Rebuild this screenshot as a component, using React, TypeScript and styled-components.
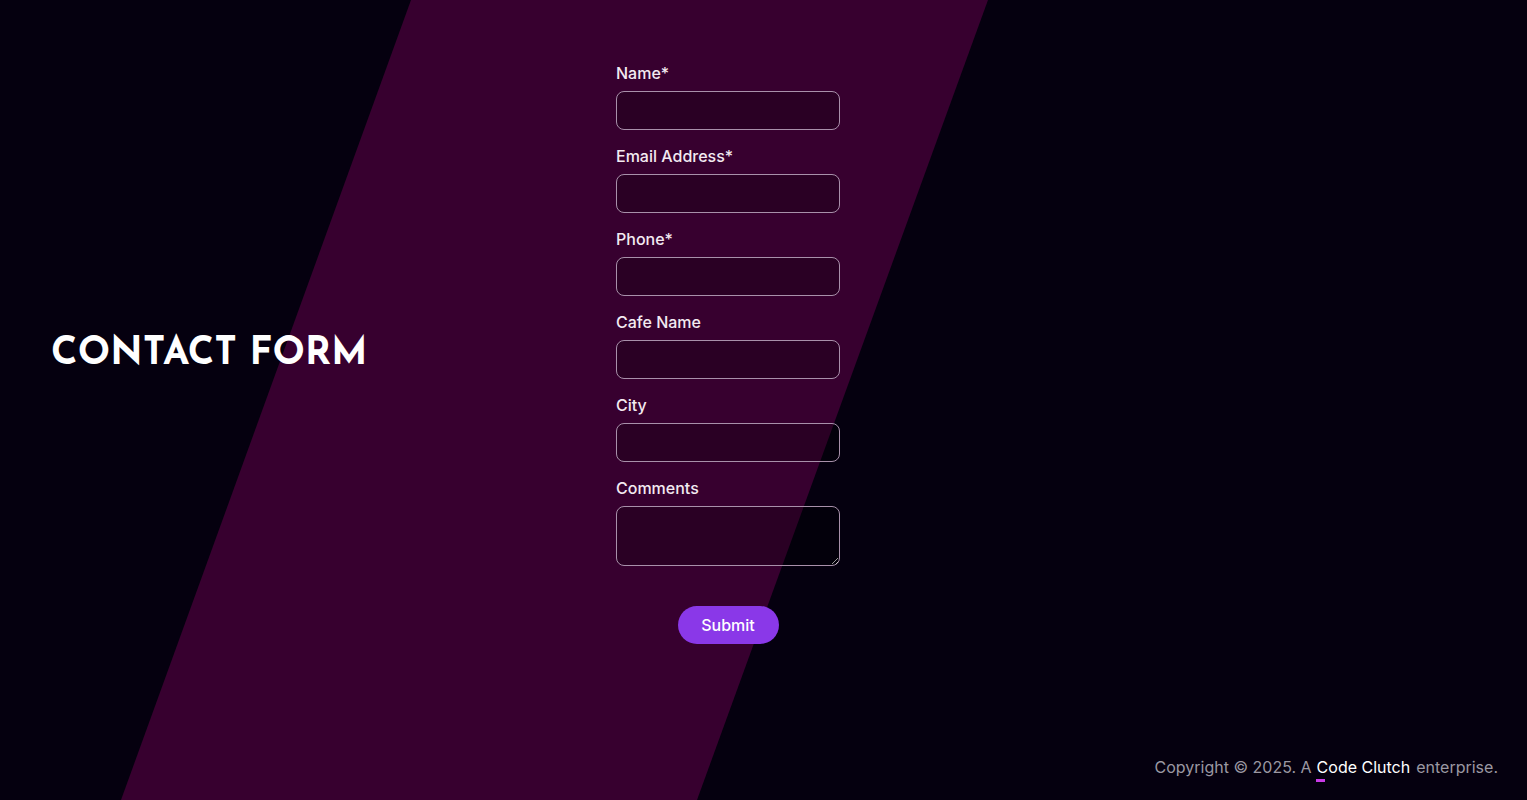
import React from 'react';
import styled, { createGlobalStyle } from 'styled-components';

const GlobalStyle = createGlobalStyle`
  * {
    box-sizing: border-box;
  }

  html,
  body {
    margin: 0;
    padding: 0;
    background: #05000f;
    font-family: Inter, 'Liberation Sans', sans-serif;
  }
`;

const Page = styled.div`
  position: relative;
  display: flex;
  flex-direction: column;
  height: 100vh;
  overflow: hidden;
  background: #05000f;
  color: #fff;

  &::before {
    content: '';
    position: absolute;
    inset: 0;
    background: #37002f;
    clip-path: polygon(411px 0, 988px 0, 697px 800px, 121px 800px);
    z-index: 0;
  }
`;

const Main = styled.main`
  position: relative;
  z-index: 1;
  flex: 1;
  display: grid;
  grid-template-columns: 564px 224px;
  align-items: center;
  align-content: start;
  padding: 63px 0 0 52px;
`;

const Heading = styled.h1`
  margin: 2px 0 0 -1px;
  font-family: 'Josefin Sans', Lato, 'Liberation Sans', sans-serif;
  font-size: 38px;
  font-weight: 700;
  letter-spacing: 0.2px;
  color: #fff;
`;

const Form = styled.form`
  display: flex;
  flex-direction: column;
`;

const Field = styled.div`
  display: flex;
  flex-direction: column;
  margin-bottom: 16px;
`;

const Label = styled.label`
  font-size: 16px;
  font-weight: 450;
  line-height: 20px;
  color: #f3eaf1;
  margin-bottom: 8px;
`;

const Input = styled.input`
  width: 224px;
  height: 39px;
  padding: 0 12px;
  border: 1px solid #a890aa;
  border-radius: 8px;
  background: rgba(0, 0, 0, 0.22);
  color: #fff;
  font: inherit;
  outline: none;
`;

const TextArea = styled.textarea`
  width: 224px;
  height: 60px;
  padding: 8px 12px;
  border: 1px solid #a890aa;
  border-radius: 8px;
  background: rgba(0, 0, 0, 0.22);
  color: #fff;
  font: inherit;
  outline: none;
  resize: vertical;
  display: block;
`;

const SubmitRow = styled.div`
  display: flex;
  justify-content: center;
  margin-top: 24px;
`;

const SubmitButton = styled.button`
  width: 101px;
  height: 38px;
  border: none;
  border-radius: 19px;
  background: #8a38e8;
  color: #fff;
  font-family: Inter, 'Liberation Sans', sans-serif;
  font-size: 16px;
  font-weight: 450;
  cursor: pointer;
`;

const Footer = styled.footer`
  position: relative;
  z-index: 1;
  display: flex;
  justify-content: flex-end;
  padding: 0 29px 23px 0;
  font-size: 16px;
  color: #9b98a2;
`;

const Brand = styled.a`
  position: relative;
  margin: 0 6px 0 5px;
  color: #fff;
  text-decoration: none;

  &::after {
    content: '';
    position: absolute;
    left: -1px;
    bottom: -5px;
    width: 9px;
    height: 3px;
    background: #c93ae6;
  }
`;

const fields = [
  { id: 'name', label: 'Name*', type: 'text' },
  { id: 'email', label: 'Email Address*', type: 'email' },
  { id: 'phone', label: 'Phone*', type: 'tel' },
  { id: 'cafe', label: 'Cafe Name', type: 'text' },
  { id: 'city', label: 'City', type: 'text' },
];

const App: React.FC = () => {
  return (
    <>
      <GlobalStyle />
      <Page>
        <Main>
          <Heading>CONTACT FORM</Heading>
          <Form onSubmit={(e) => e.preventDefault()}>
            {fields.map((f) => (
              <Field key={f.id}>
                <Label htmlFor={f.id}>{f.label}</Label>
                <Input id={f.id} name={f.id} type={f.type} />
              </Field>
            ))}
            <Field>
              <Label htmlFor="comments">Comments</Label>
              <TextArea id="comments" name="comments" />
            </Field>
            <SubmitRow>
              <SubmitButton type="submit">Submit</SubmitButton>
            </SubmitRow>
          </Form>
        </Main>
        <Footer>
          Copyright © 2025. A<Brand href="#">Code Clutch</Brand>enterprise.
        </Footer>
      </Page>
    </>
  );
};

export default App;
